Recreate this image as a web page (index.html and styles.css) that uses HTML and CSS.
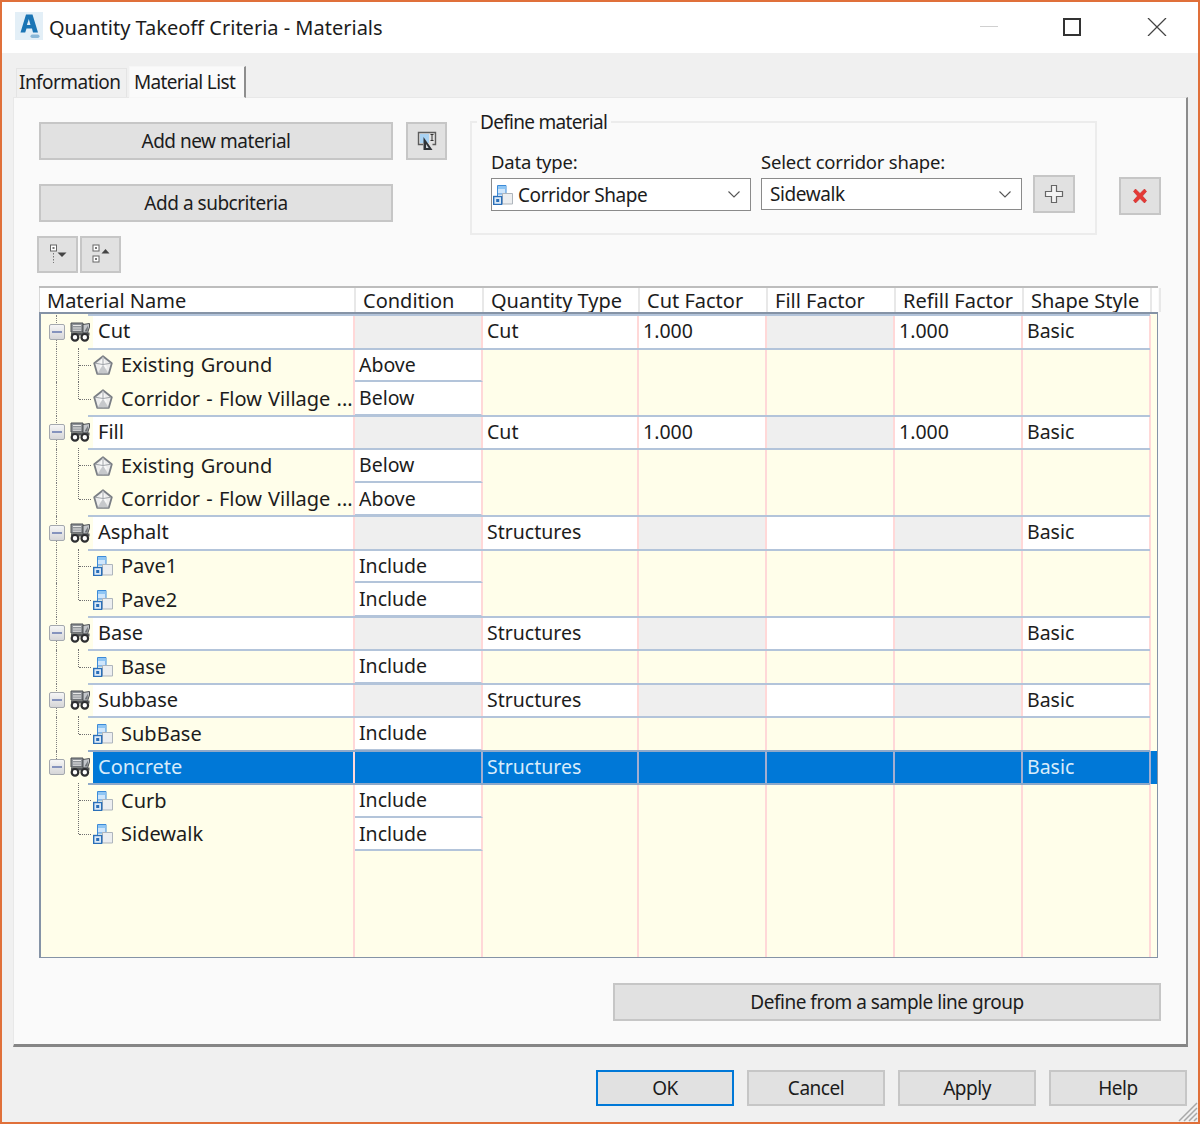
FILE: index.html
```html
<!DOCTYPE html>
<html lang="en">
<head>
<meta charset="utf-8">
<title>Quantity Takeoff Criteria - Materials</title>
<link rel="stylesheet" href="styles.css">
</head>
<body>
<svg class="defs" width="0" height="0" aria-hidden="true">
  <defs>
    <symbol id="truck" viewBox="0 0 20 20">
      <path d="M1 1h12v9H1z" fill="#8f9398" stroke="#4d5054"/>
      <path d="M3 3.500h8M3 6h8M3 8.200h8" stroke="#e8e8e8"/>
      <path d="M13 2.500l6.500-1v3.500l-2 6h-4.500z" fill="#c3c6ca" stroke="#4d5054"/>
      <path d="M18 3.500l-3.500 6h3z" fill="#6f7377"/>
      <path d="M1 10.500h18.500v3H1z" fill="#55585c"/>
      <circle cx="5" cy="15.300" r="3.300" fill="#fff" stroke="#2e2f31" stroke-width="2.200"/>
      <circle cx="14.800" cy="15.300" r="3.300" fill="#fff" stroke="#2e2f31" stroke-width="2.200"/>
    </symbol>
    <symbol id="surface" viewBox="0 0 20 20">
      <path d="M10 1.200l8.800 7-3 10.600H4.200l-3-10.600z" fill="#ececec" stroke="#7a7e84" stroke-width="1.800" stroke-linejoin="round"/>
      <path d="M10 1.500l-4 7.500 4 9.500 4-6z" fill="#f8f8f8"/>
      <path d="M10 9.500l5.500 9h-11z" fill="#c6c8cb"/>
      <path d="M10 2v7.500l8-1.300M10 9.500l-8-1.300" fill="none" stroke="#a0a4a9"/>
    </symbol>
    <symbol id="shape" viewBox="0 0 20 20">
      <path d="M4.500.500h8.500v8.500H4.500z" fill="#cfe6fb" stroke="#3c8bd8"/>
      <path d="M5 1h7.500v3H5z" fill="#8fc6f4"/>
      <path d="M4.500 9v3" stroke="#3c8bd8"/>
      <path d="M9.500 8.500h10v10.500h-10z" fill="#eceef0" stroke="#aeb5bc"/>
      <rect x=".700" y="11.500" width="8" height="8" fill="#dbe9f7" stroke="#2a6fb8" stroke-width="1.400"/>
      <rect x="3.200" y="14" width="3" height="3" fill="#2a6fb8"/>
    </symbol>
  </defs>
</svg>
<main class="window">
  <header class="titlebar">
    <svg class="app-logo" viewBox="0 0 28 28" width="28" height="28" aria-hidden="true">
      <rect width="28" height="28" fill="#e3eff7"/>
      <path d="M11 2.500h6.500l5.500 18h-5l-1-4h-5.500l-1.300 4H5.500z" fill="#1a75b5"/>
      <path d="M13.800 7l-1.900 6h3.600z" fill="#e3eff7"/>
      <rect x="15.500" y="22.500" width="9" height="3.500" rx="1.700" fill="#8ab8d8"/>
    </svg>
    <h1 class="title">Quantity Takeoff Criteria - Materials</h1>
    <div class="controls">
      <span class="ctl-min"></span>
      <span class="ctl-max"></span>
      <svg class="ctl-close" viewBox="0 0 20 18" width="20" height="18" aria-hidden="true"><path d="M1 0l18 18M19 0L1 18" stroke="#444" stroke-width="1.300" fill="none"/></svg>
    </div>
  </header>

  <nav class="tabs">
    <span class="tab">Information</span>
    <span class="tab active">Material List</span>
  </nav>

  <section class="panel">
    <div class="top">
      <div class="actions">
        <div class="action-row">
          <button class="btn wide">Add new material</button>
          <button class="btn icon-btn" aria-label="Pick">
            <svg viewBox="0 0 20 20" width="20" height="20" aria-hidden="true">
              <path d="M6 13.500H1.500V1.500h17v12h-3" fill="none" stroke="#5c5c5c" stroke-width="1.400"/>
              <rect x="3" y="3" width="9" height="9" fill="#a9d2f2"/>
              <path d="M13.500 3.500h3M15 3.500v6M13.500 9.500h3" stroke="#333" fill="none"/>
              <path d="M6.500 6l9 13h-9z" fill="#2f3338"/>
              <path d="M9 13l2.700 4H9z" fill="#cfd6dc"/>
            </svg>
          </button>
        </div>
        <button class="btn wide second">Add a subcriteria</button>
        <div class="tree-tools">
          <button class="btn tool-btn" aria-label="Expand">
            <svg viewBox="0 0 22 22" width="22" height="22" aria-hidden="true">
              <rect x="3.500" y="1" width="6" height="6" fill="#fff" stroke="#666"/>
              <rect x="5.500" y="3" width="2" height="2" fill="#777"/>
              <path d="M6.500 9v10" stroke="#777" stroke-dasharray="1.500 1.500"/>
              <path d="M10.500 8.500h9l-4.500 4.500z" fill="#444"/>
            </svg>
          </button>
          <button class="btn tool-btn" aria-label="Collapse">
            <svg viewBox="0 0 22 22" width="22" height="22" aria-hidden="true">
              <rect x="3" y="1" width="6" height="6" fill="#fff" stroke="#666"/>
              <rect x="5" y="3" width="2" height="2" fill="#777"/>
              <rect x="3" y="12" width="6" height="6" fill="#fff" stroke="#666"/>
              <rect x="5" y="14" width="2" height="2" fill="#777"/>
              <path d="M11.500 9.500h8l-4-4.500z" fill="#444"/>
            </svg>
          </button>
        </div>
      </div>

      <div class="define">
        <span class="legend">Define material</span>
        <div class="field first-field">
          <label class="field-label">Data type:</label>
          <div class="combo tall">
            <svg class="combo-icon" width="20" height="20"><use href="#shape"/></svg>
            <span class="combo-text icon-text">Corridor Shape</span>
            <svg class="chevron" viewBox="0 0 12 7" width="12" height="7" aria-hidden="true"><path d="M.5.500L6 6l5.500-5.500" fill="none" stroke="#555" stroke-width="1.100"/></svg>
          </div>
        </div>
        <div class="field second-field">
          <label class="field-label">Select corridor shape:</label>
          <div class="combo">
            <span class="combo-text">Sidewalk</span>
            <svg class="chevron" viewBox="0 0 12 7" width="12" height="7" aria-hidden="true"><path d="M.5.500L6 6l5.500-5.500" fill="none" stroke="#555" stroke-width="1.100"/></svg>
          </div>
        </div>
        <button class="btn small-square" aria-label="Add">
          <svg viewBox="0 0 20 20" width="20" height="20" aria-hidden="true"><path d="M7.500 1.500h5v6h6v5h-6v6h-5v-6h-6v-5h6z" fill="#f4f4f4" stroke="#666" stroke-width="1.200"/></svg>
        </button>
      </div>

      <button class="btn small-square delete" aria-label="Delete">
        <svg viewBox="0 0 16 16" width="16" height="16" aria-hidden="true"><path d="M1.500 3.500L3.500 1 8 5.500 12.500 1l2 2.500L10.500 8l4 4.500-2 2.500L8 10.500 3.500 15l-2-2.500L5.500 8z" fill="#e53935" stroke="#c62828" stroke-width=".6"/></svg>
      </button>
    </div>

    <div class="table">
      <div class="thead">
        <span class="th">Material Name</span>
        <span class="th">Condition</span>
        <span class="th">Quantity Type</span>
        <span class="th">Cut Factor</span>
        <span class="th">Fill Factor</span>
        <span class="th">Refill Factor</span>
        <span class="th">Shape Style</span>
        <span class="th end"></span>
      </div>
      <div class="tbody">

        <div class="row parent">
          <div class="c name"><i class="rail"></i><span class="exp"></span><svg class="truck" width="20" height="20"><use href="#truck"/></svg><span class="plabel">Cut</span></div>
          <div class="c gray"></div><div class="c wh">Cut</div><div class="c wh">1.000</div><div class="c gray"></div><div class="c wh">1.000</div><div class="c wh">Basic</div><div class="c end"></div>
        </div>
        <div class="row">
          <div class="c name child"><i class="rail"></i><i class="branch"></i><svg class="node" width="20" height="20"><use href="#surface"/></svg><span class="clabel">Existing Ground</span></div>
          <div class="c wh cond">Above</div><div class="c"></div><div class="c"></div><div class="c"></div><div class="c"></div><div class="c"></div><div class="c end"></div>
        </div>
        <div class="row">
          <div class="c name child"><i class="rail"></i><i class="branch last"></i><svg class="node" width="20" height="20"><use href="#surface"/></svg><span class="clabel">Corridor - Flow Village ...</span></div>
          <div class="c wh cond">Below</div><div class="c"></div><div class="c"></div><div class="c"></div><div class="c"></div><div class="c"></div><div class="c end"></div>
        </div>

        <div class="row parent">
          <div class="c name"><i class="rail"></i><span class="exp"></span><svg class="truck" width="20" height="20"><use href="#truck"/></svg><span class="plabel">Fill</span></div>
          <div class="c gray"></div><div class="c wh">Cut</div><div class="c wh">1.000</div><div class="c gray"></div><div class="c wh">1.000</div><div class="c wh">Basic</div><div class="c end"></div>
        </div>
        <div class="row">
          <div class="c name child"><i class="rail"></i><i class="branch"></i><svg class="node" width="20" height="20"><use href="#surface"/></svg><span class="clabel">Existing Ground</span></div>
          <div class="c wh cond">Below</div><div class="c"></div><div class="c"></div><div class="c"></div><div class="c"></div><div class="c"></div><div class="c end"></div>
        </div>
        <div class="row">
          <div class="c name child"><i class="rail"></i><i class="branch last"></i><svg class="node" width="20" height="20"><use href="#surface"/></svg><span class="clabel">Corridor - Flow Village ...</span></div>
          <div class="c wh cond">Above</div><div class="c"></div><div class="c"></div><div class="c"></div><div class="c"></div><div class="c"></div><div class="c end"></div>
        </div>

        <div class="row parent">
          <div class="c name"><i class="rail"></i><span class="exp"></span><svg class="truck" width="20" height="20"><use href="#truck"/></svg><span class="plabel">Asphalt</span></div>
          <div class="c gray"></div><div class="c wh">Structures</div><div class="c gray"></div><div class="c wh"></div><div class="c gray"></div><div class="c wh">Basic</div><div class="c end"></div>
        </div>
        <div class="row">
          <div class="c name child"><i class="rail"></i><i class="branch"></i><svg class="node" width="20" height="20"><use href="#shape"/></svg><span class="clabel">Pave1</span></div>
          <div class="c wh cond">Include</div><div class="c"></div><div class="c"></div><div class="c"></div><div class="c"></div><div class="c"></div><div class="c end"></div>
        </div>
        <div class="row">
          <div class="c name child"><i class="rail"></i><i class="branch last"></i><svg class="node" width="20" height="20"><use href="#shape"/></svg><span class="clabel">Pave2</span></div>
          <div class="c wh cond">Include</div><div class="c"></div><div class="c"></div><div class="c"></div><div class="c"></div><div class="c"></div><div class="c end"></div>
        </div>

        <div class="row parent">
          <div class="c name"><i class="rail"></i><span class="exp"></span><svg class="truck" width="20" height="20"><use href="#truck"/></svg><span class="plabel">Base</span></div>
          <div class="c gray"></div><div class="c wh">Structures</div><div class="c gray"></div><div class="c wh"></div><div class="c gray"></div><div class="c wh">Basic</div><div class="c end"></div>
        </div>
        <div class="row">
          <div class="c name child"><i class="rail"></i><i class="branch last"></i><svg class="node" width="20" height="20"><use href="#shape"/></svg><span class="clabel">Base</span></div>
          <div class="c wh cond">Include</div><div class="c"></div><div class="c"></div><div class="c"></div><div class="c"></div><div class="c"></div><div class="c end"></div>
        </div>

        <div class="row parent">
          <div class="c name"><i class="rail"></i><span class="exp"></span><svg class="truck" width="20" height="20"><use href="#truck"/></svg><span class="plabel">Subbase</span></div>
          <div class="c gray"></div><div class="c wh">Structures</div><div class="c gray"></div><div class="c wh"></div><div class="c gray"></div><div class="c wh">Basic</div><div class="c end"></div>
        </div>
        <div class="row">
          <div class="c name child"><i class="rail"></i><i class="branch last"></i><svg class="node" width="20" height="20"><use href="#shape"/></svg><span class="clabel">SubBase</span></div>
          <div class="c wh cond">Include</div><div class="c"></div><div class="c"></div><div class="c"></div><div class="c"></div><div class="c"></div><div class="c end"></div>
        </div>

        <div class="row parent selected">
          <div class="c name"><i class="rail half"></i><span class="exp"></span><svg class="truck" width="20" height="20"><use href="#truck"/></svg><span class="plabel">Concrete</span></div>
          <div class="c sel"></div><div class="c sel">Structures</div><div class="c sel"></div><div class="c sel"></div><div class="c sel"></div><div class="c sel">Basic</div><div class="c sel end"></div>
        </div>
        <div class="row">
          <div class="c name child"><i class="branch"></i><svg class="node" width="20" height="20"><use href="#shape"/></svg><span class="clabel">Curb</span></div>
          <div class="c wh cond">Include</div><div class="c"></div><div class="c"></div><div class="c"></div><div class="c"></div><div class="c"></div><div class="c end"></div>
        </div>
        <div class="row">
          <div class="c name child"><i class="branch last"></i><svg class="node" width="20" height="20"><use href="#shape"/></svg><span class="clabel">Sidewalk</span></div>
          <div class="c wh cond">Include</div><div class="c"></div><div class="c"></div><div class="c"></div><div class="c"></div><div class="c"></div><div class="c end"></div>
        </div>

        <div class="row filler">
          <div class="c"></div><div class="c"></div><div class="c"></div><div class="c"></div><div class="c"></div><div class="c"></div><div class="c"></div><div class="c end"></div>
        </div>
      </div>
    </div>

    <button class="btn sample">Define from a sample line group</button>
  </section>

  <footer class="footer">
    <button class="btn foot primary">OK</button>
    <button class="btn foot">Cancel</button>
    <button class="btn foot">Apply</button>
    <button class="btn foot">Help</button>
  </footer>

  <svg class="grip" viewBox="0 0 22 22" width="22" height="22" aria-hidden="true"><path d="M21 3L3 21M21 8L8 21M21 13L13 21M21 18l-3 3" stroke="#a8a8a8" stroke-width="1.500"/></svg>
</main>
</body>
</html>
```
FILE: styles.css
```css
* { box-sizing: border-box; }
html, body { margin: 0; padding: 0; }
body {
  width: 1200px;
  height: 1124px;
  font-family: "Noto Sans", "Liberation Sans", sans-serif;
  font-size: 20px;
  color: #1c1c1c;
  overflow: hidden;
}
.defs { position: absolute; }
.window {
  position: relative;
  width: 1200px;
  height: 1124px;
  border: 2px solid #e0703a;
  background: #f0f0f0;
  display: flex;
  flex-direction: column;
}

/* title bar */
.titlebar {
  height: 51px;
  background: #fff;
  display: flex;
  align-items: center;
  padding-left: 13px;
  flex: none;
}
.app-logo { margin-top: -4px; flex: none; }
.title {
  margin: 0 0 0 6px;
  font-size: 20px;
  font-weight: 400;
  flex: 1;
}
.controls {
  display: flex;
  align-items: center;
  width: 187px;
  margin-top: -2px;
  margin-right: 31px;
}
.ctl-min { width: 18px; height: 1px; background: #d0d0d0; }
.ctl-max { width: 18px; height: 18px; border: 2px solid #333; margin-left: 65px; }
.ctl-close { margin-left: 66px; }

/* tabs */
.tabs {
  flex: none;
  height: 44px;
  padding: 12px 0 0 14px;
  display: flex;
  align-items: flex-end;
  gap: 2px;
}
.tab {
  height: 29px;
  width: 111px;
  padding-left: 2px;
  line-height: 27px;
  background: #f0f0f0;
  border: 1px solid #e4e4e4;
  border-bottom: 0;
  font-size: 19px;
  letter-spacing: -.55px;
}
.tab.active {
  height: 32px;
  width: 117px;
  padding-left: 4px;
  line-height: 31px;
  background: #fafafa;
  border: 1px solid #f6f6f6;
  border-right: 2px solid #8e8e8e;
  margin-bottom: -1px;
  position: relative;
  letter-spacing: -.65px;
}

/* main panel */
.panel {
  flex: none;
  width: 1175px;
  height: 950px;
  margin-left: 11px;
  padding: 24px 0 0 25px;
  background: #fafafa;
  border: 1px solid #e8e8e8;
  border-right: 2px solid #8c8c8c;
  border-bottom: 3px solid #858585;
}
.top { display: flex; align-items: flex-start; height: 164px; }
.actions { width: 408px; flex: none; }
.action-row { display: flex; gap: 13px; }
.btn {
  font: inherit;
  font-size: 19px;
  letter-spacing: -.48px;
  color: #1c1c1c;
  background: #e1e1e1;
  border: 2px solid #c6c6c6;
  padding: 0;
  display: flex;
  align-items: center;
  justify-content: center;
}
.wide { width: 354px; height: 38px; }
.second { margin-top: 24px; }
.icon-btn { width: 41px; height: 38px; }
.tree-tools { display: flex; gap: 2px; margin: 14px 0 0 -2px; }
.tool-btn { width: 41px; height: 37px; }

.define {
  position: relative;
  flex: none;
  width: 627px;
  height: 114px;
  margin: -1px 0 0 23px;
  border: 2px solid #ececec;
  display: flex;
  align-items: flex-start;
  padding: 25px 0 0 19px;
}
.legend {
  position: absolute;
  left: 5px;
  top: -13px;
  padding: 0 4px 0 3px;
  background: #fafafa;
  font-size: 19px;
  letter-spacing: -.7px;
  line-height: 24px;
}
.field { flex: none; }
.first-field { width: 260px; margin-right: 10px; }
.second-field { width: 261px; margin-right: 11px; }
.field-label {
  display: block;
  font-size: 18.500px;
  letter-spacing: -.22px;
  line-height: 24px;
  height: 30px;
  padding-top: 2px;
}
.combo {
  position: relative;
  height: 32px;
  border: 1px solid #8a8a8a;
  background: #fff;
  display: flex;
  align-items: center;
  padding-left: 8px;
  font-size: 19px;
  letter-spacing: -.42px;
}
.combo.tall { height: 33px; padding-left: 0; }
.combo-icon { margin-left: 1px; flex: none; }
.combo-text { flex: 1; white-space: nowrap; }
.icon-text { margin-left: 5px; }
.chevron { margin-right: 10px; flex: none; }
.small-square { width: 42px; height: 38px; flex: none; margin-top: 27px; }
.delete { margin: 55px 0 0 22px; }

/* grid */
.table {
  width: 1119px;
  height: 672px;
  display: flex;
  flex-direction: column;
  border-top: 2px solid #bdbdbd;
}
.thead {
  flex: none;
  height: 24px;
  display: grid;
  grid-template-columns: 316px 128px 156px 128px 128px 128px 128px 6px;
  background: #fff;
  border-left: 1px solid #d8d8d8;
}
.th {
  border-right: 2px solid #e8e8e8;
  padding: 1px 0 0 7px;
  line-height: 23px;
  font-size: 20px;
  white-space: nowrap;
}
.tbody {
  flex: 1;
  min-height: 0;
  display: flex;
  flex-direction: column;
  padding-top: 1px;
  border: 2px solid #8593a6;
  border-width: 2px 1px 1px 2px;
  background: #fffeea;
}
.row {
  position: relative;
  flex: none;
  height: 33.500px;
  display: grid;
  grid-template-columns: 314px 128px 156px 128px 128px 128px 128px 1fr;
}
.row.parent::before,
.row.parent::after {
  content: "";
  position: absolute;
  left: 47px;
  right: 7px;
  height: 2px;
  background: #b3c4da;
  z-index: 2;
}
.row.parent::before { top: -1px; }
.row.parent::after { bottom: -1px; }
.row.filler { flex: 1; }
.c {
  position: relative;
  border-right: 2px solid #ffd8d8;
  padding-left: 4px;
  line-height: 32px;
  font-size: 19.500px;
  white-space: nowrap;
  overflow: hidden;
}
.c.end { border-right: 0; }
.c.wh { background: #fff; }
.c.gray { background: #efefef; }
.c.cond { border-bottom: 2px solid #b3c4da; }
.c.name {
  overflow: visible;
  display: flex;
  align-items: center;
  padding-left: 8px;
  font-size: 20px;
}
.c.name.child { padding-left: 52px; }

.rail {
  position: absolute;
  left: 15px;
  top: 0;
  bottom: 0;
  border-left: 1px dotted #808080;
}
.rail.half { bottom: 50%; }
.branch {
  position: absolute;
  left: 37px;
  top: -1px;
  bottom: 0;
  width: 13px;
  border-left: 1px dotted #707070;
}
.branch::after {
  content: "";
  position: absolute;
  left: 0;
  top: 50%;
  width: 12px;
  border-top: 1px dotted #707070;
}
.branch.last { bottom: 50%; }
.branch.last::after { top: 100%; }

.exp {
  position: relative;
  flex: none;
  width: 16px;
  height: 16px;
  border: 1px solid #a4a8ae;
  border-radius: 2px;
  background: linear-gradient(#f6f6f6, #d6d6d8);
  display: block;
}
.exp::after {
  content: "";
  position: absolute;
  left: 2px;
  right: 2px;
  top: 6px;
  height: 2px;
  background: #8593bd;
}
.truck { flex: none; margin: 0 0 0 5px; }
.plabel {
  flex: 1;
  align-self: stretch;
  margin-left: 3px;
  padding-left: 5px;
  background: #fff;
}
.node { flex: none; }
.clabel { margin-left: 8px; white-space: nowrap; word-spacing: 1px; }

.row.selected .plabel,
.c.sel {
  background: #0078d7;
  color: #d8ecfb;
}
.c.sel { border-right-color: #a3aed0; }
.row.selected::before,
.row.selected::after { background: #8fa9c9; }

/* lower buttons */
.sample { width: 548px; height: 38px; margin: 25px 0 0 574px; }
.footer {
  flex: none;
  display: flex;
  justify-content: flex-end;
  gap: 13px;
  padding: 23px 11px 0 0;
}
.foot { width: 138px; height: 36px; }
.foot.primary { border-color: #0078d7; }
.grip { position: absolute; right: 0; bottom: 0; }
```
